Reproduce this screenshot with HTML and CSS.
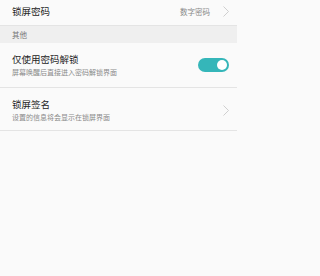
FILE: index.html
```html
<!DOCTYPE html>
<html lang="zh">
<head>
<meta charset="utf-8">
<link rel="stylesheet" href="styles.css">
</head>
<body>
<div class="list">
  <div class="row row-top">
    <span class="title">锁屏密码</span>
    <span class="right">
      <span class="value">数字密码</span>
      <svg class="chev" width="6" height="11" viewBox="0 0 6 11"><polyline points="0.5,0.5 5.5,5.5 0.5,10.5" fill="none" stroke="#c9c9c9" stroke-width="0.9"/></svg>
    </span>
  </div>
  <div class="section">其他</div>
  <div class="row row-two">
    <div class="texts">
      <span class="title">仅使用密码解锁</span>
      <span class="sub">屏幕唤醒后直接进入密码解锁界面</span>
    </div>
    <span class="toggle"><span class="knob"></span></span>
  </div>
  <div class="row row-three">
    <div class="texts">
      <span class="title">锁屏签名</span>
      <span class="sub">设置的信息将会显示在锁屏界面</span>
    </div>
    <svg class="chev" width="6" height="11" viewBox="0 0 6 11"><polyline points="0.5,0.5 5.5,5.5 0.5,10.5" fill="none" stroke="#c9c9c9" stroke-width="0.9"/></svg>
  </div>
</div>
</body>
</html>
```

FILE: styles.css
```css
html, body {
  margin: 0;
  padding: 0;
  background: #fafafa;
}
body {
  font-family: "Noto Sans CJK SC", "Noto Sans", sans-serif;
  width: 237px;
  height: 276px;
  overflow: hidden;
}
.list {
  display: flex;
  flex-direction: column;
}
.row {
  display: flex;
  align-items: center;
  justify-content: space-between;
  padding: 0 8px 0 12px;
  border-bottom: 1px solid #e4e4e4;
  background: #fafafa;
  box-sizing: border-box;
}
.row-top {
  height: 26px;
  padding-bottom: 2px;
}
.row-two {
  height: 45px;
}
.row-three {
  height: 43px;
  padding-top: 2px;
}
.title {
  font-size: 9.5px;
  line-height: 13px;
  color: #242424;
}
.texts {
  display: flex;
  flex-direction: column;
  gap: 1px;
}
.sub {
  font-size: 7px;
  line-height: 11px;
  color: #8a8a8a;
}
.right {
  display: flex;
  align-items: center;
  gap: 13px;
}
.value {
  font-size: 7.5px;
  line-height: 11px;
  color: #888888;
}
.chev {
  display: block;
}
.section {
  height: 17px;
  box-sizing: border-box;
  padding-left: 12px;
  display: flex;
  align-items: center;
  background: #efefef;
  font-size: 7.5px;
  color: #777777;
}
.toggle {
  position: relative;
  width: 31px;
  height: 14px;
  border-radius: 7px;
  background: #35b6b9;
}
.knob {
  position: absolute;
  right: 2px;
  top: 2px;
  width: 10px;
  height: 10px;
  border-radius: 50%;
  background: #ffffff;
}
```
